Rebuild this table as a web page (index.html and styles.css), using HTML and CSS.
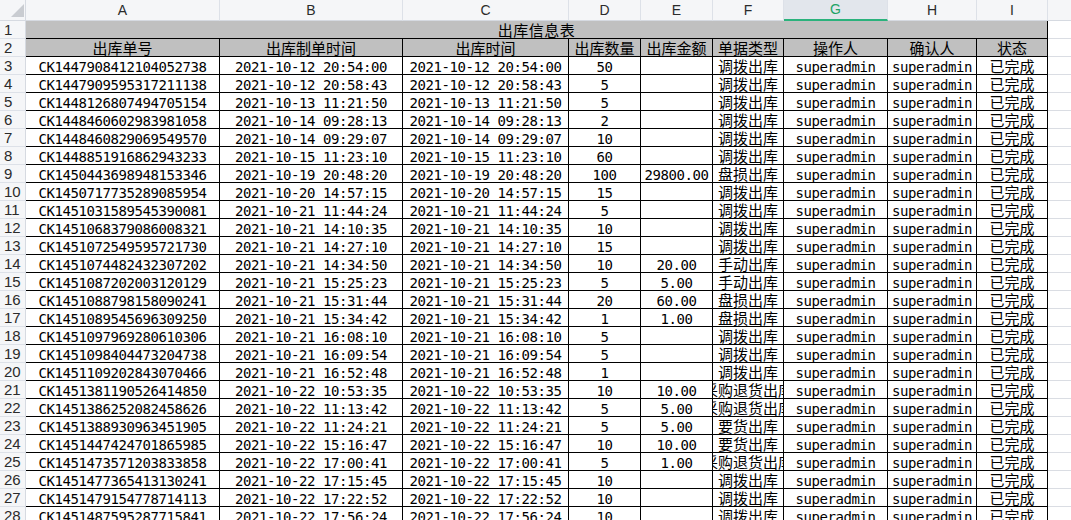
FILE: index.html
```html
<!DOCTYPE html>
<html lang="zh">
<head>
<meta charset="utf-8">
<title>出库信息表</title>
<link rel="stylesheet" href="styles.css">
</head>
<body>
<div class="sheet">
  <div class="row hdr">
    <div class="corner"><svg width="26" height="21" viewBox="0 0 26 21"><polygon points="24,4 24,17 11,17" fill="#c9ccd1"/></svg></div>
    <div class="ch">A</div><div class="ch">B</div><div class="ch">C</div><div class="ch">D</div><div class="ch">E</div><div class="ch">F</div><div class="ch sel">G</div><div class="ch">H</div><div class="ch">I</div><div class="ch last"></div>
  </div>
  <div class="row">
    <div class="rh">1</div><div class="title cj">出库信息表</div><div class="x"></div>
  </div>
  <div class="row">
    <div class="rh">2</div>
    <div class="c th cj"><span>出库单号</span></div><div class="c th cj"><span>出库制单时间</span></div><div class="c th cj"><span>出库时间</span></div><div class="c th cj"><span>出库数量</span></div><div class="c th cj"><span>出库金额</span></div><div class="c th cj"><span>单据类型</span></div><div class="c th cj"><span>操作人</span></div><div class="c th cj"><span>确认人</span></div><div class="c th cj"><span>状态</span></div><div class="x"></div>
  </div>
  <div class="row"><div class="rh">3</div><div class="c"><span>CK1447908412104052738</span></div><div class="c"><span>2021-10-12 20:54:00</span></div><div class="c"><span>2021-10-12 20:54:00</span></div><div class="c"><span>50</span></div><div class="c"></div><div class="c cj"><span>调拨出库</span></div><div class="c"><span>superadmin</span></div><div class="c"><span>superadmin</span></div><div class="c cj"><span>已完成</span></div><div class="x"></div></div>
  <div class="row"><div class="rh">4</div><div class="c"><span>CK1447909595317211138</span></div><div class="c"><span>2021-10-12 20:58:43</span></div><div class="c"><span>2021-10-12 20:58:43</span></div><div class="c"><span>5</span></div><div class="c"></div><div class="c cj"><span>调拨出库</span></div><div class="c"><span>superadmin</span></div><div class="c"><span>superadmin</span></div><div class="c cj"><span>已完成</span></div><div class="x"></div></div>
  <div class="row"><div class="rh">5</div><div class="c"><span>CK1448126807494705154</span></div><div class="c"><span>2021-10-13 11:21:50</span></div><div class="c"><span>2021-10-13 11:21:50</span></div><div class="c"><span>5</span></div><div class="c"></div><div class="c cj"><span>调拨出库</span></div><div class="c"><span>superadmin</span></div><div class="c"><span>superadmin</span></div><div class="c cj"><span>已完成</span></div><div class="x"></div></div>
  <div class="row"><div class="rh">6</div><div class="c"><span>CK1448460602983981058</span></div><div class="c"><span>2021-10-14 09:28:13</span></div><div class="c"><span>2021-10-14 09:28:13</span></div><div class="c"><span>2</span></div><div class="c"></div><div class="c cj"><span>调拨出库</span></div><div class="c"><span>superadmin</span></div><div class="c"><span>superadmin</span></div><div class="c cj"><span>已完成</span></div><div class="x"></div></div>
  <div class="row"><div class="rh">7</div><div class="c"><span>CK1448460829069549570</span></div><div class="c"><span>2021-10-14 09:29:07</span></div><div class="c"><span>2021-10-14 09:29:07</span></div><div class="c"><span>10</span></div><div class="c"></div><div class="c cj"><span>调拨出库</span></div><div class="c"><span>superadmin</span></div><div class="c"><span>superadmin</span></div><div class="c cj"><span>已完成</span></div><div class="x"></div></div>
  <div class="row"><div class="rh">8</div><div class="c"><span>CK1448851916862943233</span></div><div class="c"><span>2021-10-15 11:23:10</span></div><div class="c"><span>2021-10-15 11:23:10</span></div><div class="c"><span>60</span></div><div class="c"></div><div class="c cj"><span>调拨出库</span></div><div class="c"><span>superadmin</span></div><div class="c"><span>superadmin</span></div><div class="c cj"><span>已完成</span></div><div class="x"></div></div>
  <div class="row"><div class="rh">9</div><div class="c"><span>CK1450443698948153346</span></div><div class="c"><span>2021-10-19 20:48:20</span></div><div class="c"><span>2021-10-19 20:48:20</span></div><div class="c"><span>100</span></div><div class="c"><span>29800.00</span></div><div class="c cj"><span>盘损出库</span></div><div class="c"><span>superadmin</span></div><div class="c"><span>superadmin</span></div><div class="c cj"><span>已完成</span></div><div class="x"></div></div>
  <div class="row"><div class="rh">10</div><div class="c"><span>CK1450717735289085954</span></div><div class="c"><span>2021-10-20 14:57:15</span></div><div class="c"><span>2021-10-20 14:57:15</span></div><div class="c"><span>15</span></div><div class="c"></div><div class="c cj"><span>调拨出库</span></div><div class="c"><span>superadmin</span></div><div class="c"><span>superadmin</span></div><div class="c cj"><span>已完成</span></div><div class="x"></div></div>
  <div class="row"><div class="rh">11</div><div class="c"><span>CK1451031589545390081</span></div><div class="c"><span>2021-10-21 11:44:24</span></div><div class="c"><span>2021-10-21 11:44:24</span></div><div class="c"><span>5</span></div><div class="c"></div><div class="c cj"><span>调拨出库</span></div><div class="c"><span>superadmin</span></div><div class="c"><span>superadmin</span></div><div class="c cj"><span>已完成</span></div><div class="x"></div></div>
  <div class="row"><div class="rh">12</div><div class="c"><span>CK1451068379086008321</span></div><div class="c"><span>2021-10-21 14:10:35</span></div><div class="c"><span>2021-10-21 14:10:35</span></div><div class="c"><span>10</span></div><div class="c"></div><div class="c cj"><span>调拨出库</span></div><div class="c"><span>superadmin</span></div><div class="c"><span>superadmin</span></div><div class="c cj"><span>已完成</span></div><div class="x"></div></div>
  <div class="row"><div class="rh">13</div><div class="c"><span>CK1451072549595721730</span></div><div class="c"><span>2021-10-21 14:27:10</span></div><div class="c"><span>2021-10-21 14:27:10</span></div><div class="c"><span>15</span></div><div class="c"></div><div class="c cj"><span>调拨出库</span></div><div class="c"><span>superadmin</span></div><div class="c"><span>superadmin</span></div><div class="c cj"><span>已完成</span></div><div class="x"></div></div>
  <div class="row"><div class="rh">14</div><div class="c"><span>CK1451074482432307202</span></div><div class="c"><span>2021-10-21 14:34:50</span></div><div class="c"><span>2021-10-21 14:34:50</span></div><div class="c"><span>10</span></div><div class="c"><span>20.00</span></div><div class="c cj"><span>手动出库</span></div><div class="c"><span>superadmin</span></div><div class="c"><span>superadmin</span></div><div class="c cj"><span>已完成</span></div><div class="x"></div></div>
  <div class="row"><div class="rh">15</div><div class="c"><span>CK1451087202003120129</span></div><div class="c"><span>2021-10-21 15:25:23</span></div><div class="c"><span>2021-10-21 15:25:23</span></div><div class="c"><span>5</span></div><div class="c"><span>5.00</span></div><div class="c cj"><span>手动出库</span></div><div class="c"><span>superadmin</span></div><div class="c"><span>superadmin</span></div><div class="c cj"><span>已完成</span></div><div class="x"></div></div>
  <div class="row"><div class="rh">16</div><div class="c"><span>CK1451088798158090241</span></div><div class="c"><span>2021-10-21 15:31:44</span></div><div class="c"><span>2021-10-21 15:31:44</span></div><div class="c"><span>20</span></div><div class="c"><span>60.00</span></div><div class="c cj"><span>盘损出库</span></div><div class="c"><span>superadmin</span></div><div class="c"><span>superadmin</span></div><div class="c cj"><span>已完成</span></div><div class="x"></div></div>
  <div class="row"><div class="rh">17</div><div class="c"><span>CK1451089545696309250</span></div><div class="c"><span>2021-10-21 15:34:42</span></div><div class="c"><span>2021-10-21 15:34:42</span></div><div class="c"><span>1</span></div><div class="c"><span>1.00</span></div><div class="c cj"><span>盘损出库</span></div><div class="c"><span>superadmin</span></div><div class="c"><span>superadmin</span></div><div class="c cj"><span>已完成</span></div><div class="x"></div></div>
  <div class="row"><div class="rh">18</div><div class="c"><span>CK1451097969280610306</span></div><div class="c"><span>2021-10-21 16:08:10</span></div><div class="c"><span>2021-10-21 16:08:10</span></div><div class="c"><span>5</span></div><div class="c"></div><div class="c cj"><span>调拨出库</span></div><div class="c"><span>superadmin</span></div><div class="c"><span>superadmin</span></div><div class="c cj"><span>已完成</span></div><div class="x"></div></div>
  <div class="row"><div class="rh">19</div><div class="c"><span>CK1451098404473204738</span></div><div class="c"><span>2021-10-21 16:09:54</span></div><div class="c"><span>2021-10-21 16:09:54</span></div><div class="c"><span>5</span></div><div class="c"></div><div class="c cj"><span>调拨出库</span></div><div class="c"><span>superadmin</span></div><div class="c"><span>superadmin</span></div><div class="c cj"><span>已完成</span></div><div class="x"></div></div>
  <div class="row"><div class="rh">20</div><div class="c"><span>CK1451109202843070466</span></div><div class="c"><span>2021-10-21 16:52:48</span></div><div class="c"><span>2021-10-21 16:52:48</span></div><div class="c"><span>1</span></div><div class="c"></div><div class="c cj"><span>调拨出库</span></div><div class="c"><span>superadmin</span></div><div class="c"><span>superadmin</span></div><div class="c cj"><span>已完成</span></div><div class="x"></div></div>
  <div class="row"><div class="rh">21</div><div class="c"><span>CK1451381190526414850</span></div><div class="c"><span>2021-10-22 10:53:35</span></div><div class="c"><span>2021-10-22 10:53:35</span></div><div class="c"><span>10</span></div><div class="c"><span>10.00</span></div><div class="c cj"><span>采购退货出库</span></div><div class="c"><span>superadmin</span></div><div class="c"><span>superadmin</span></div><div class="c cj"><span>已完成</span></div><div class="x"></div></div>
  <div class="row"><div class="rh">22</div><div class="c"><span>CK1451386252082458626</span></div><div class="c"><span>2021-10-22 11:13:42</span></div><div class="c"><span>2021-10-22 11:13:42</span></div><div class="c"><span>5</span></div><div class="c"><span>5.00</span></div><div class="c cj"><span>采购退货出库</span></div><div class="c"><span>superadmin</span></div><div class="c"><span>superadmin</span></div><div class="c cj"><span>已完成</span></div><div class="x"></div></div>
  <div class="row"><div class="rh">23</div><div class="c"><span>CK1451388930963451905</span></div><div class="c"><span>2021-10-22 11:24:21</span></div><div class="c"><span>2021-10-22 11:24:21</span></div><div class="c"><span>5</span></div><div class="c"><span>5.00</span></div><div class="c cj"><span>要货出库</span></div><div class="c"><span>superadmin</span></div><div class="c"><span>superadmin</span></div><div class="c cj"><span>已完成</span></div><div class="x"></div></div>
  <div class="row"><div class="rh">24</div><div class="c"><span>CK1451447424701865985</span></div><div class="c"><span>2021-10-22 15:16:47</span></div><div class="c"><span>2021-10-22 15:16:47</span></div><div class="c"><span>10</span></div><div class="c"><span>10.00</span></div><div class="c cj"><span>要货出库</span></div><div class="c"><span>superadmin</span></div><div class="c"><span>superadmin</span></div><div class="c cj"><span>已完成</span></div><div class="x"></div></div>
  <div class="row"><div class="rh">25</div><div class="c"><span>CK1451473571203833858</span></div><div class="c"><span>2021-10-22 17:00:41</span></div><div class="c"><span>2021-10-22 17:00:41</span></div><div class="c"><span>5</span></div><div class="c"><span>1.00</span></div><div class="c cj"><span>采购退货出库</span></div><div class="c"><span>superadmin</span></div><div class="c"><span>superadmin</span></div><div class="c cj"><span>已完成</span></div><div class="x"></div></div>
  <div class="row"><div class="rh">26</div><div class="c"><span>CK1451477365413130241</span></div><div class="c"><span>2021-10-22 17:15:45</span></div><div class="c"><span>2021-10-22 17:15:45</span></div><div class="c"><span>10</span></div><div class="c"></div><div class="c cj"><span>调拨出库</span></div><div class="c"><span>superadmin</span></div><div class="c"><span>superadmin</span></div><div class="c cj"><span>已完成</span></div><div class="x"></div></div>
  <div class="row"><div class="rh">27</div><div class="c"><span>CK1451479154778714113</span></div><div class="c"><span>2021-10-22 17:22:52</span></div><div class="c"><span>2021-10-22 17:22:52</span></div><div class="c"><span>10</span></div><div class="c"></div><div class="c cj"><span>调拨出库</span></div><div class="c"><span>superadmin</span></div><div class="c"><span>superadmin</span></div><div class="c cj"><span>已完成</span></div><div class="x"></div></div>
  <div class="row"><div class="rh">28</div><div class="c"><span>CK1451487595287715841</span></div><div class="c"><span>2021-10-22 17:56:24</span></div><div class="c"><span>2021-10-22 17:56:24</span></div><div class="c"><span>10</span></div><div class="c"></div><div class="c cj"><span>调拨出库</span></div><div class="c"><span>superadmin</span></div><div class="c"><span>superadmin</span></div><div class="c cj"><span>已完成</span></div><div class="x"></div></div>
</div>
</body>
</html>
```
FILE: styles.css
```css
html, body {
  margin: 0;
  padding: 0;
  background: #ffffff;
}
body {
  width: 1071px;
  height: 520px;
  overflow: hidden;
}
.sheet {
  display: flex;
  flex-direction: column;
}
.row {
  display: grid;
  grid-template-columns: 26px 194px 183px 166px 72px 72px 71px 104px 89px 71px 23px;
  height: 18px;
}
.row.hdr {
  height: 21px;
}
.corner {
  background: #f5f6f8;
  border-right: 1px solid #d6dae1;
  border-bottom: 1px solid #d6dae1;
  box-sizing: border-box;
  overflow: hidden;
}
.corner svg {
  display: block;
}
.ch {
  box-sizing: border-box;
  background: #f5f6f8;
  border-right: 1px solid #dde1e8;
  border-bottom: 1px solid #d6dae1;
  font-family: "Liberation Sans", "Noto Sans", sans-serif;
  font-size: 14px;
  line-height: 20px;
  color: #2b2b2b;
  text-align: center;
}
.ch.sel {
  background: #e2e6ec;
  color: #21a366;
  border-bottom: 2px solid #2bb27c;
  line-height: 19px;
}
.ch.last {
  border-right: none;
}
.rh {
  box-sizing: border-box;
  background: #f5f6f8;
  border-right: 1px solid #d6dae1;
  border-bottom: 1px solid #dde1e8;
  font-family: "Liberation Sans", "Noto Sans", sans-serif;
  font-size: 15px;
  line-height: 18px;
  color: #2b2b2b;
  padding-left: 4px;
  overflow: hidden;
  white-space: nowrap;
}
.title {
  grid-column: span 9;
  box-sizing: border-box;
  background: #c0c0c0;
  border-right: 1px solid #000;
  border-bottom: 1px solid #000;
  text-align: center;
}
.x {
  box-sizing: border-box;
  border-bottom: 1px solid #dadde3;
  background: #fff;
}
.c {
  box-sizing: border-box;
  border-right: 1px solid #000;
  border-bottom: 1px solid #000;
  display: flex;
  justify-content: center;
  overflow: hidden;
  white-space: nowrap;
  font-family: "DejaVu Sans Mono", "Liberation Mono", monospace;
  font-size: 14px;
  letter-spacing: -0.43px;
  line-height: 16px;
  padding-top: 2px;
  color: #000;
}
.c span {
  flex: none;
}
.cj {
  font-family: "Noto Sans CJK SC", "Noto Sans", sans-serif;
  font-size: 15px;
  letter-spacing: 0;
  line-height: 15px;
  padding-top: 1px;
  color: #000;
}
.title.cj {
  line-height: 15px;
  padding-top: 1px;
  letter-spacing: 0.5px;
}
.th {
  background: #c0c0c0;
}
```
